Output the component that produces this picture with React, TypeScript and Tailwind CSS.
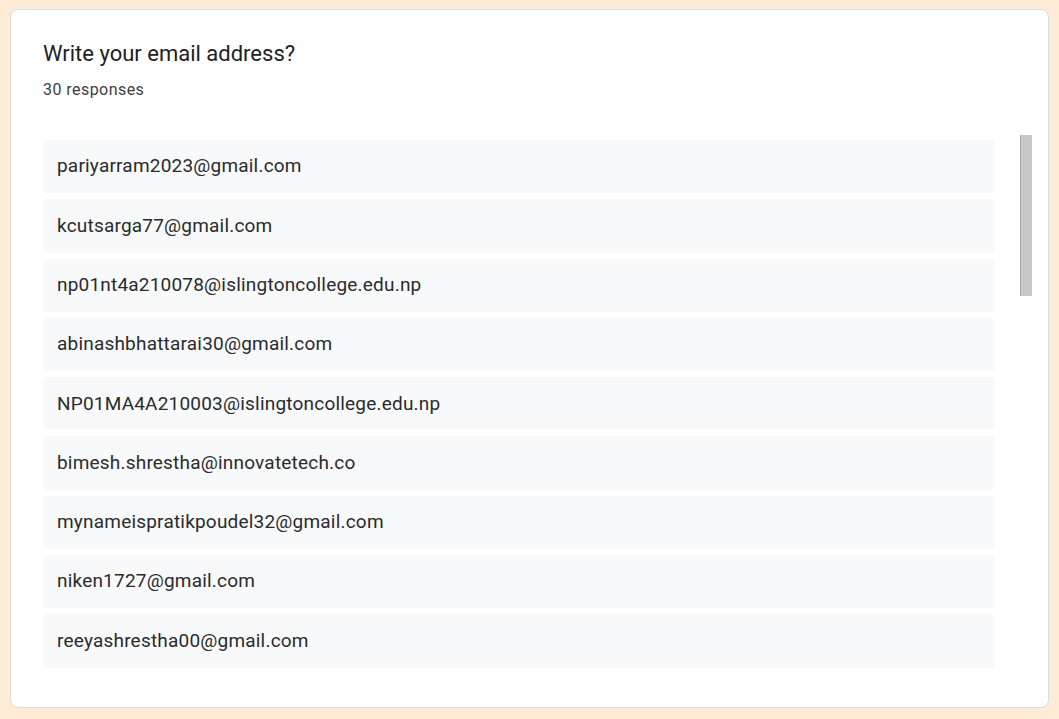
import React from 'react';

const emails = [
  'pariyarram2023@gmail.com',
  'kcutsarga77@gmail.com',
  'np01nt4a210078@islingtoncollege.edu.np',
  'abinashbhattarai30@gmail.com',
  'NP01MA4A210003@islingtoncollege.edu.np',
  'bimesh.shrestha@innovatetech.co',
  'mynameispratikpoudel32@gmail.com',
  'niken1727@gmail.com',
  'reeyashrestha00@gmail.com',
];

const App: React.FC = () => {
  return (
    <div
      className="min-h-screen bg-[#feecd6] px-[10px] pt-[9px] pb-[11px]"
      style={{ fontFamily: 'Roboto, "Liberation Sans", sans-serif' }}
    >
      {/* Card */}
      <div className="h-[699px] bg-white border border-[#dadce0] rounded-[8px] pl-[32px] pr-[16px] pt-[29px]">
        <h2 className="text-[22px] leading-[30px] text-[#202124]">Write your email address?</h2>
        <div className="mt-[11px] text-[16px] leading-[20px] tracking-[0.45px] text-[#3c4043]">30 responses</div>

        {/* Lista de respuestas + barra de scroll */}
        <div className="mt-[35px] h-[535px] flex">
          <div className="flex-1 overflow-hidden pr-[25px] pt-[5px]">
            <div className="flex flex-col gap-[6px]">
              {emails.map((email) => (
                <div
                  key={email}
                  className="h-[53.3px] shrink-0 flex items-center bg-[#f8f9fa] rounded-[4px] px-[14px] text-[19px] tracking-[0.2px] text-[#2a2b2e] whitespace-nowrap"
                >
                  {email}
                </div>
              ))}
            </div>
          </div>
          <div className="w-[12px] shrink-0">
            <div className="h-[161px] bg-[#c8c8c8] border-l border-[#a8a8a8]" />
          </div>
        </div>
      </div>
    </div>
  );
};

export default App;
